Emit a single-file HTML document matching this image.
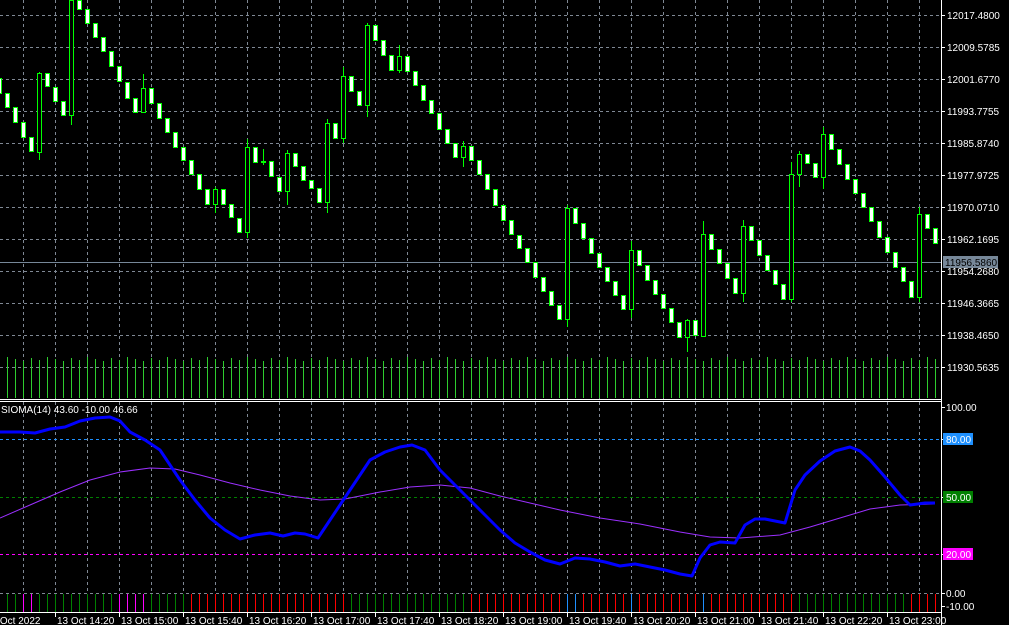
<!DOCTYPE html>
<html><head><meta charset="utf-8"><style>
html,body{margin:0;padding:0;background:#000;width:1009px;height:625px;overflow:hidden}
svg{display:block}
text{font-family:"Liberation Sans",sans-serif;font-size:10px;fill:#fff}
</style></head><body>
<svg id="s" width="1009" height="625" xmlns="http://www.w3.org/2000/svg" shape-rendering="crispEdges">
<rect width="1009" height="625" fill="#000"/>
<g id="grid" stroke="#7f8894" stroke-width="1" stroke-dasharray="3,3"></g>
<line x1="0" y1="262.5" x2="941" y2="262.5" stroke="#778899"/>
<g id="vol" stroke="#2ecc2e"></g>
<g id="candles"></g>
<line x1="0" y1="439.5" x2="941" y2="439.5" stroke="#1e90ff" stroke-dasharray="3,3"/>
<line x1="0" y1="497.5" x2="941" y2="497.5" stroke="#008000" stroke-dasharray="3,3"/>
<line x1="0" y1="554.5" x2="941" y2="554.5" stroke="#ff00ff" stroke-dasharray="3,3"/>
<g id="hist"></g>
<polyline shape-rendering="auto" fill="none" stroke="#9b30ff" stroke-width="1" points="0,518 30,505 60,492 90,480 120,472 150,468 175,469 200,475 230,483 260,490 290,496 320,500 345,499 380,492 410,487 440,485 470,488 500,496 530,503 560,510 600,518 640,524 680,532 710,537 740,538 780,535 810,527 840,518 870,509 900,505 935,504"/>
<polyline shape-rendering="auto" fill="none" stroke="#0000ff" stroke-width="3" stroke-linejoin="round" points="0,432 20,432 35,433 50,429 65,427 80,421 95,418 110,417 120,421 130,432 145,440 160,450 170,465 180,480 195,500 210,518 225,530 240,539 255,535 270,533 283,536 295,533 305,534 318,538 330,520 340,505 350,490 360,475 370,460 385,452 400,447 412,445 425,450 440,470 455,485 470,500 485,515 500,530 515,543 530,552 545,560 560,564 575,558 590,559 605,562 620,566 635,564 650,567 665,570 680,574 692,576 700,558 710,545 720,542 735,543 745,525 755,519 765,519 775,521 785,523 795,490 805,475 820,461 835,451 850,447 860,451 870,460 885,477 900,495 910,505 925,503 935,503"/>
<text x="1" y="413">SIOMA(14) 43.60 -10.00 46.66</text>
<line x1="941.5" y1="0" x2="941.5" y2="625" stroke="#fff"/>
<line x1="0" y1="399.5" x2="941" y2="399.5" stroke="#fff"/>
<line x1="0" y1="401.5" x2="941" y2="401.5" stroke="#fff"/>
<line x1="0" y1="612.5" x2="941" y2="612.5" stroke="#fff"/>
<g id="axis"></g>
</svg>
<script>
var NS="http://www.w3.org/2000/svg";
function el(p,t,a,txt){var e=document.createElementNS(NS,t);for(var k in a)e.setAttribute(k,a[k]);if(txt!=null)e.textContent=txt;document.getElementById(p).appendChild(e);return e;}
// grid
for(var x=23;x<941;x+=32) el("grid","line",{x1:x+.5,y1:0,x2:x+.5,y2:612});
for(var y=15;y<=367;y+=32) el("grid","line",{x1:0,y1:y+.5,x2:941,y2:y+.5});
el("grid","line",{x1:0,y1:593.5,x2:941,y2:593.5});
// candles: [k, top, bottom, hollow, wickTop, wickBot]
var C=[[-1,78,93],[0,93,107],[1,107,122],[2,122,137],[3,137,151],[4,73,152,1,72,160],[5,73,86],[6,87,101],[7,101,115],[8,0,115,1,0,125],[9,0,9],[10,9,23],[11,23,37],[12,37,51],[13,51,66],[14,66,81],[15,82,98],[16,98,112],[17,88,112,1,74,113],[18,88,103],[19,103,118],[20,118,132],[21,132,147],[22,147,160],[23,160,174],[24,174,189],[25,189,204],[26,189,204,1,187,213],[27,189,204],[28,204,217],[29,218,232],[30,147,232,1,139,238],[31,147,162],[32,161,163,2,149,165],[33,161,176],[34,177,191],[35,153,191,1,150,205],[36,153,166],[37,166,180],[38,180,188],[39,188,202],[40,123,202,1,119,213],[41,123,138],[42,76,138,1,67,143],[43,76,91],[44,91,105],[45,25,105,1,23,117],[46,25,40],[47,40,55],[48,55,70],[49,56,70,1,45,73],[50,56,71],[51,71,85],[52,85,100],[53,100,113],[54,113,129],[55,129,143],[56,143,157],[57,146,157,1,141,167],[58,146,160],[59,160,174],[60,174,189],[61,189,205],[62,205,220],[63,220,234],[64,235,248],[65,248,262],[66,262,277],[67,277,291],[68,291,305],[69,305,319],[70,208,319,1,205,327],[71,208,223],[72,223,238],[73,238,253],[74,253,267],[75,267,281],[76,281,295],[77,295,309],[78,250,309,1,241,318],[79,250,265],[80,265,280],[81,280,294],[82,294,308],[83,308,322],[84,322,337],[85,320,337,1,319,352],[86,320,335],[87,234,336,1,221,337],[88,234,249],[89,249,263],[90,263,278],[91,278,293],[92,226,293,1,220,302],[93,226,240],[94,240,255],[95,255,270],[96,270,284],[97,284,299],[98,174,299,1,162,302],[99,154,174,1,151,187],[100,154,163],[101,163,177],[102,134,177,1,127,189],[103,134,149],[104,149,164],[105,164,179],[106,179,193],[107,193,207],[108,207,221],[109,221,237],[110,237,252],[111,252,267],[112,267,281],[113,281,297],[114,214,297,1,207,302],[115,214,228],[116,228,243]];
C.forEach(function(c){var cx=7+8*c[0];
 if(c[3]){el("candles","line",{x1:cx+.5,y1:c[4],x2:cx+.5,y2:c[5],stroke:"#00ff00"});}
 if(c[3]==2){el("candles","rect",{x:cx-2,y:c[1],width:5,height:2,fill:"#00ff00"});return;}
 el("candles","rect",{x:cx-1.5,y:c[1]+.5,width:4,height:Math.max(1,c[2]-c[1]),fill:c[3]?"#000":"#fff",stroke:"#00ff00","stroke-width":1});
});
// volume bars
for(var k=0;k<=116;k++){var cx=7+8*k;var t=357+((k*7)%5);el("vol","line",{x1:cx+.5,y1:t,x2:cx+.5,y2:398});}
// histogram
function col(k){if(k==2||k==3||(k>=14&&k<=17))return"#ff00ff";if(k>=23&&k<=42)return"#ff0000";if(k>=43&&k<=57)return"#008000";if(k==70||k==71||k==78||k==87)return"#1e90ff";if(k>=58&&k<=98)return"#ff0000";if(k>=99&&k<=112)return"#008000";if(k>=113)return"#ff0000";return"#008000";}
for(var k=0;k<=116;k++){var cx=7+8*k;el("hist","line",{x1:cx+.5,y1:594,x2:cx+.5,y2:612,stroke:col(k)});}
// price axis
var P=["12017.4800","12009.5785","12001.6770","11993.7755","11985.8740","11977.9725","11970.0710","11962.1695","11954.2680","11946.3665","11938.4650","11930.5635"];
P.forEach(function(p,i){var y=15+32*i;el("axis","line",{x1:941,y1:y+.5,x2:945,y2:y+.5,stroke:"#fff"});el("axis","text",{x:947,y:y+4},p);});
el("axis","rect",{x:943,y:256,width:55,height:12,fill:"#778899"});
el("axis","text",{x:945,y:266,style:"fill:#000"},"11956.5860");
var L=[["100.00",407,null],["80.00",439,"#1e90ff"],["50.00",497,"#008000"],["20.00",554,"#ff00ff"],["0.00",593,null],["-10.00",606,null]];
L.forEach(function(l){el("axis","line",{x1:941,y1:l[1]+.5,x2:945,y2:l[1]+.5,stroke:"#fff"});if(l[2])el("axis","rect",{x:943,y:l[1]-6,width:30,height:12,fill:l[2]});el("axis","text",{x:946,y:l[1]+4},l[0]);});
// time axis
var T=["13 Oct 14:20","13 Oct 15:00","13 Oct 15:40","13 Oct 16:20","13 Oct 17:00","13 Oct 17:40","13 Oct 18:20","13 Oct 19:00","13 Oct 19:40","13 Oct 20:20","13 Oct 21:00","13 Oct 21:40","13 Oct 22:20","13 Oct 23:00"];
el("axis","text",{x:-14,y:624},"13 Oct 2022");
T.forEach(function(t,i){var x=55+64*i;el("axis","line",{x1:x+.5,y1:612,x2:x+.5,y2:617,stroke:"#fff"});el("axis","text",{x:x+2,y:624},t);});
</script>
</body></html>
